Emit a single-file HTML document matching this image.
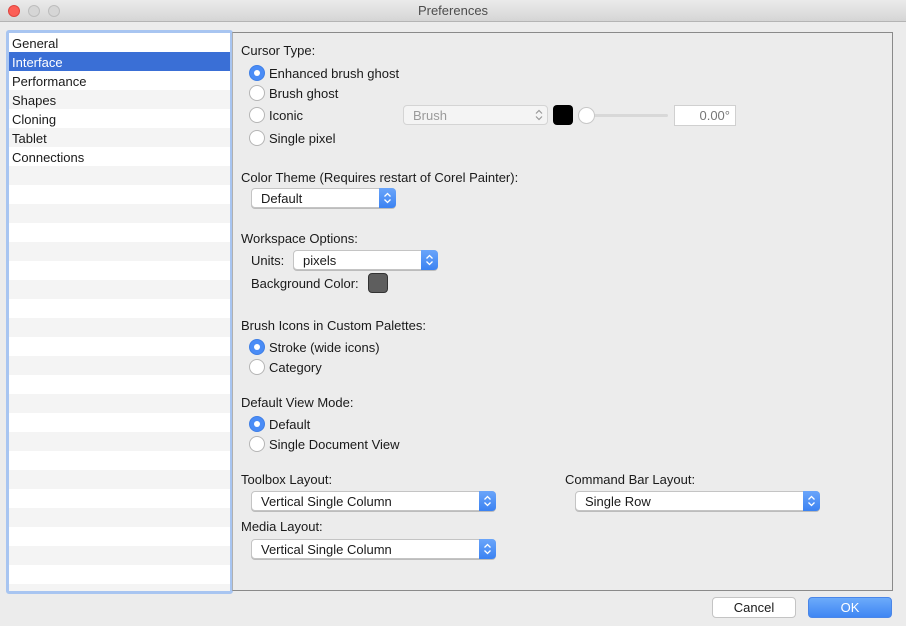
<!DOCTYPE html>
<html><head><meta charset="utf-8">
<style>
*{box-sizing:border-box;margin:0;padding:0}
body{width:906px;height:626px;background:#ececec;font-family:"Liberation Sans",sans-serif;font-size:13px;color:#1a1a1a;position:relative;overflow:hidden}
.a{position:absolute;white-space:nowrap;line-height:16px;margin-top:1px}
.title{position:absolute;left:0;top:0;width:906px;height:22px;background:linear-gradient(#ebebeb,#d5d5d5);border-bottom:1px solid #b4b4b4;text-align:center;line-height:22px;color:#4d4d4d}
.tl{position:absolute;top:5px;width:12px;height:12px;border-radius:50%;background:#d6d6d6;border:1px solid #bdbdbd}
.list{position:absolute;left:6px;top:30px;width:227px;height:564px;border:3px solid #a8c5f1;border-radius:3px;background:#fff;overflow:hidden}
.row{height:19px;line-height:21px;padding-left:3px}
.row:nth-child(even){background:#f4f4f4}
.row.sel{background:#3a6fd6;color:#fff}
.panel{position:absolute;left:232px;top:32px;width:661px;height:559px;border:1px solid #8a8a8a;border-left:1px solid #b0b0b0}
.rb{position:absolute;width:16px;height:16px;border-radius:50%;background:#fff;border:1px solid #b5b5b5}
.rb.on{background:#4a8cf6;border-color:#3f7fe6}
.rb.on:after{content:"";position:absolute;left:4px;top:4px;width:6px;height:6px;border-radius:50%;background:#fff}
.pop{position:absolute;height:20px;background:#fff;border:1px solid #c4c4c4;border-radius:4px;line-height:19px;padding-left:9px;box-shadow:0 1px 0 #bcbcbc}
.pop .ar{position:absolute;right:-1px;top:-1px;width:17px;height:20px;background:linear-gradient(#6aa5fa,#3b82f2);border-radius:0 4px 4px 0}
.pop .ar svg{position:absolute;left:4px;top:4px}
.btn{position:absolute;height:21px;border-radius:4px;text-align:center;line-height:19px}
</style></head><body>
<div class="title">Preferences</div>
<div class="tl" style="left:8px;background:#fc5f57;border-color:#de4640"></div>
<div class="tl" style="left:28px"></div>
<div class="tl" style="left:48px"></div>

<div class="list">
<div class="row">General</div><div class="row sel">Interface</div><div class="row">Performance</div><div class="row">Shapes</div><div class="row">Cloning</div><div class="row">Tablet</div><div class="row">Connections</div>
<div class="row"></div><div class="row"></div><div class="row"></div><div class="row"></div><div class="row"></div><div class="row"></div><div class="row"></div><div class="row"></div><div class="row"></div><div class="row"></div><div class="row"></div><div class="row"></div><div class="row"></div><div class="row"></div><div class="row"></div><div class="row"></div><div class="row"></div><div class="row"></div><div class="row"></div><div class="row"></div><div class="row"></div><div class="row"></div><div class="row"></div>
</div>
<div class="panel"></div>

<div class="a" style="left:241px;top:42px">Cursor Type:</div>
<div class="rb on" style="left:249px;top:65px"></div><div class="a" style="left:269px;top:65px">Enhanced brush ghost</div>
<div class="rb" style="left:249px;top:85px"></div><div class="a" style="left:269px;top:85px">Brush ghost</div>
<div class="rb" style="left:249px;top:107px"></div><div class="a" style="left:269px;top:107px">Iconic</div>
<div class="rb" style="left:249px;top:130px"></div><div class="a" style="left:269px;top:130px">Single pixel</div>

<div class="pop" style="left:403px;top:105px;width:145px;color:#9a9a9a;background:#f4f4f4;box-shadow:none;border-color:#d4d4d4">Brush<svg style="position:absolute;right:4px;top:3px" width="8" height="12" viewBox="0 0 8 12"><path d="M1 4.5L4 1.5 7 4.5M1 7.5L4 10.5 7 7.5" fill="none" stroke="#999" stroke-width="1.2"/></svg></div>
<div style="position:absolute;left:553px;top:105px;width:20px;height:20px;background:#000;border-radius:4px"></div>
<div style="position:absolute;left:585px;top:114px;width:83px;height:3px;background:#d8d8d8;border-radius:2px"></div>
<div style="position:absolute;left:578px;top:107px;width:17px;height:17px;border-radius:50%;background:#fff;border:1px solid #c8c8c8"></div>
<div style="position:absolute;left:674px;top:105px;width:62px;height:21px;background:#fff;border:1px solid #d0d0d0;text-align:right;padding-right:5px;line-height:20px;color:#777">0.00°</div>

<div class="a" style="left:241px;top:169px">Color Theme (Requires restart of Corel Painter):</div>
<div class="pop" style="left:251px;top:188px;width:145px">Default<div class="ar"><svg width="9" height="12" viewBox="0 0 9 12"><path d="M1.5 4.5L4.5 1.5 7.5 4.5M1.5 7.5L4.5 10.5 7.5 7.5" fill="none" stroke="#fff" stroke-width="1.3"/></svg></div></div>

<div class="a" style="left:241px;top:230px">Workspace Options:</div>
<div class="a" style="left:251px;top:252px">Units:</div>
<div class="pop" style="left:293px;top:250px;width:145px">pixels<div class="ar"><svg width="9" height="12" viewBox="0 0 9 12"><path d="M1.5 4.5L4.5 1.5 7.5 4.5M1.5 7.5L4.5 10.5 7.5 7.5" fill="none" stroke="#fff" stroke-width="1.3"/></svg></div></div>
<div class="a" style="left:251px;top:275px">Background Color:</div>
<div style="position:absolute;left:368px;top:273px;width:20px;height:20px;background:#5e5e5e;border:1px solid #333;border-radius:4px"></div>

<div class="a" style="left:241px;top:317px">Brush Icons in Custom Palettes:</div>
<div class="rb on" style="left:249px;top:339px"></div><div class="a" style="left:269px;top:339px">Stroke (wide icons)</div>
<div class="rb" style="left:249px;top:359px"></div><div class="a" style="left:269px;top:359px">Category</div>

<div class="a" style="left:241px;top:394px">Default View Mode:</div>
<div class="rb on" style="left:249px;top:416px"></div><div class="a" style="left:269px;top:416px">Default</div>
<div class="rb" style="left:249px;top:436px"></div><div class="a" style="left:269px;top:436px">Single Document View</div>

<div class="a" style="left:241px;top:471px">Toolbox Layout:</div>
<div class="pop" style="left:251px;top:491px;width:245px">Vertical Single Column<div class="ar"><svg width="9" height="12" viewBox="0 0 9 12"><path d="M1.5 4.5L4.5 1.5 7.5 4.5M1.5 7.5L4.5 10.5 7.5 7.5" fill="none" stroke="#fff" stroke-width="1.3"/></svg></div></div>
<div class="a" style="left:565px;top:471px">Command Bar Layout:</div>
<div class="pop" style="left:575px;top:491px;width:245px">Single Row<div class="ar"><svg width="9" height="12" viewBox="0 0 9 12"><path d="M1.5 4.5L4.5 1.5 7.5 4.5M1.5 7.5L4.5 10.5 7.5 7.5" fill="none" stroke="#fff" stroke-width="1.3"/></svg></div></div>
<div class="a" style="left:241px;top:518px">Media Layout:</div>
<div class="pop" style="left:251px;top:539px;width:245px">Vertical Single Column<div class="ar"><svg width="9" height="12" viewBox="0 0 9 12"><path d="M1.5 4.5L4.5 1.5 7.5 4.5M1.5 7.5L4.5 10.5 7.5 7.5" fill="none" stroke="#fff" stroke-width="1.3"/></svg></div></div>

<div class="btn" style="left:712px;top:597px;width:84px;background:#fff;border:1px solid #c4c4c4">Cancel</div>
<div class="btn" style="left:808px;top:597px;width:84px;background:linear-gradient(#6cabfa,#3f86f3);border:1px solid #4a86e8;color:#fff">OK</div>
</body></html>
